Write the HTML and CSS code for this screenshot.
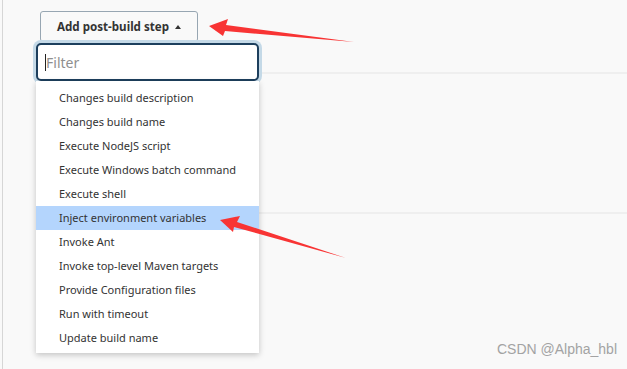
FILE: index.html
```html
<!DOCTYPE html>
<html lang="en">
<head>
    <meta charset="UTF-8">
    <title>Post-build Actions</title>
    <link rel="stylesheet" href="styles.css">
</head>
<body>
<div class="page">
    <div class="btn-wrap">
        <button class="add-btn" type="button">Add post-build step <span class="caret"></span></button>

        <div class="dropdown">
            <input class="filter" type="text" placeholder="Filter">
            <span class="cursor"></span>
            <ul class="menu">
                <li>Changes build description</li>
                <li>Changes build name</li>
                <li>Execute NodeJS script</li>
                <li>Execute Windows batch command</li>
                <li>Execute shell</li>
                <li class="active">Inject environment variables</li>
                <li>Invoke Ant</li>
                <li>Invoke top-level Maven targets</li>
                <li>Provide Configuration files</li>
                <li>Run with timeout</li>
                <li>Update build name</li>
            </ul>
        </div>
    </div>

    <div class="rule first"></div>
    <div class="rule second"></div>

    <div class="watermark">CSDN @Alpha_hbl</div>
</div>

<!-- annotation arrows -->
<svg class="arrows" width="627" height="369" viewBox="0 0 627 369">
    <polygon points="209,26 228,19 226,25 354,42 225,31 223,36" fill="#f83434"/>
    <polygon points="220,220 240,216 237,222 346,258 234,227 233,232" fill="#f83434"/>
</svg>
</body>
</html>
```

FILE: styles.css
```css
html, body {
    margin: 0;
    padding: 0;
}

body {
    background: #f9f9f9;
    font-family: "Noto Sans", "Open Sans", sans-serif;
    color: #333;
    height: 369px;
    overflow: hidden;
}

.page {
    position: relative;
    margin-left: 2px;
    border-left: 1px solid #d6d6d6;
    height: 369px;
    box-sizing: border-box;
    padding-top: 11px;
    padding-left: 37px;
}

.btn-wrap {
    position: relative;
    width: 158px;
}

.add-btn {
    display: flex;
    align-items: center;
    justify-content: center;
    gap: 6px;
    width: 158px;
    height: 31px;
    margin: 0;
    padding: 0;
    background: #f9f9f9;
    border: 1px solid #97a6b2;
    border-radius: 3px;
    font-family: inherit;
    font-size: 11.6px;
    font-weight: bold;
    color: #333;
}

.caret {
    width: 0;
    height: 0;
    border-left: 3.5px solid transparent;
    border-right: 3.5px solid transparent;
    border-bottom: 4px solid #333;
}

.dropdown {
    position: absolute;
    top: 32px;
    left: -4px;
    width: 223px;
    z-index: 2;
}

.filter {
    display: block;
    width: 223px;
    height: 38px;
    box-sizing: border-box;
    margin: 0;
    padding: 0 8px;
    border: 2px solid #1d3f5d;
    border-radius: 5px;
    box-shadow: 0 0 0 3px #c4d9e7;
    background: #fff;
    font-family: inherit;
    font-size: 14px;
    outline: none;
}

.filter::placeholder {
    color: #8f8f8f;
}

.cursor {
    position: absolute;
    top: 11px;
    left: 9px;
    width: 1px;
    height: 17px;
    background: #222;
}

.menu {
    list-style: none;
    margin: 0;
    padding: 5px 0 3px;
    background: #fff;
    box-shadow: 0 2px 6px rgba(0, 0, 0, 0.22);
}

.menu li {
    height: 24px;
    line-height: 24px;
    padding-left: 23px;
    font-size: 11px;
    color: #333;
    white-space: nowrap;
}

.menu li.active {
    background: #b4d5fd;
}

.rule {
    height: 2px;
    background: #efefef;
    margin-left: 218px;
}

.rule.first {
    margin-top: 30px;
}

.rule.second {
    margin-top: 138px;
}

.watermark {
    position: absolute;
    right: 10px;
    bottom: 12px;
    font-family: "Liberation Sans", Arial, sans-serif;
    font-size: 14px;
    color: #a3a3a3;
}

.arrows {
    position: absolute;
    top: 0;
    left: 0;
    z-index: 5;
    pointer-events: none;
}
```
